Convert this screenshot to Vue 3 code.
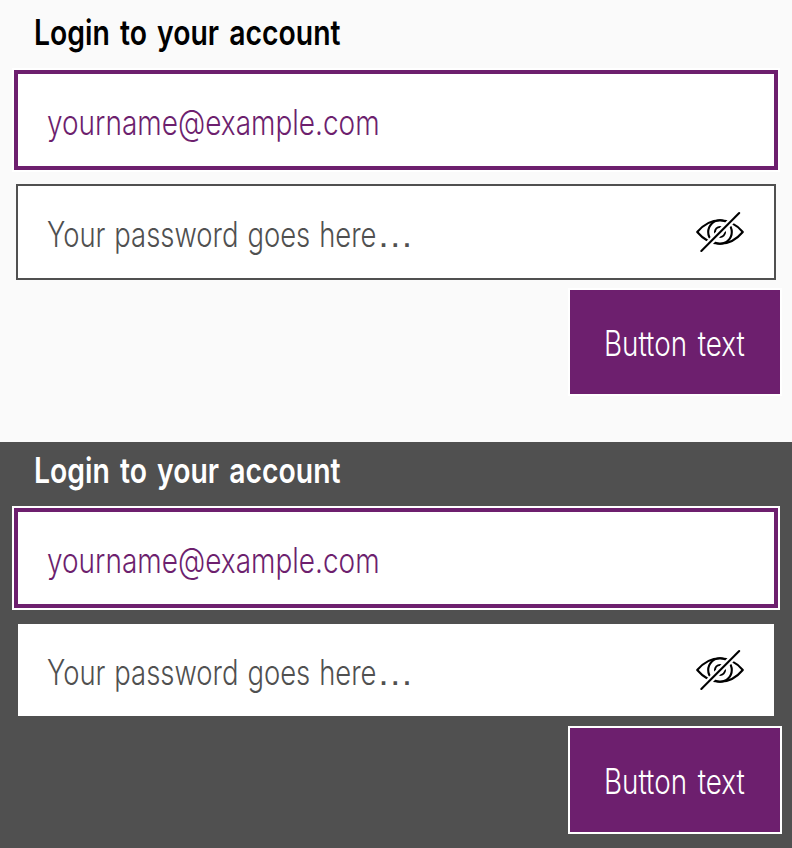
<script setup>
const panels = ['light', 'dark']
</script>

<template>
  <main class="page">
    <form v-for="panel in panels" :key="panel" class="panel" :class="panel" @submit.prevent>
      <h2 class="title"><span class="type">Login to your account</span></h2>
      <div class="field focused"><span class="type email">yourname@example.com</span></div>
      <div class="field password">
        <span class="type hint">Your password goes here<span class="dots">…</span></span>
        <svg class="eye" width="52" height="44" viewBox="0 0 52 44" fill="none" stroke="#000" stroke-width="2.1">
          <path d="M3.2 22C9.5 14.5 17 10.2 26 10.2S42.5 14.5 48.8 22C42.5 29.5 35 33.8 26 33.8S9.5 29.5 3.2 22Z" stroke-linejoin="round" />
          <circle cx="26" cy="22" r="11.8" />
          <circle cx="26" cy="22" r="5" />
          <path d="M7.3 41L45.2 3.1" stroke="#fff" stroke-width="6.6" />
          <path d="M7.3 41L45.2 3.1" stroke-linecap="round" />
        </svg>
      </div>
      <button class="submit"><span class="type">Button text</span></button>
    </form>
  </main>
</template>

<style>
body {
  margin: 0;
}
</style>

<style scoped>
.page {
  width: 792px;
  height: 848px;
  overflow: hidden;
  font-family: Inter, sans-serif;
  font-size: 35px;
  line-height: 42px;
}
.panel {
  box-sizing: border-box;
  display: flex;
  flex-direction: column;
  padding: 0 14px;
}
.light {
  height: 442px;
  padding-top: 11px;
  background: #fafafa;
  color: #000;
}
.dark {
  height: 406px;
  padding-top: 7px;
  background: #505050;
  color: #fff;
}
.type {
  display: inline-block;
  white-space: nowrap;
  transform-origin: left center;
}
.title {
  margin: 0 0 17px 20px;
  font-size: 35px;
  font-weight: 600;
}
.title .type {
  word-spacing: 3.7px;
  transform: scaleX(0.81);
}
.field {
  box-sizing: border-box;
  display: flex;
  align-items: center;
  justify-content: space-between;
  background: #fff;
  font-weight: 300;
}
.focused {
  height: 100px;
  padding: 4px 29px 0;
  border: 4px solid #6d1f6e;
  outline: 2px solid #fff;
  color: #6d1f6e;
}
.email {
  transform: scaleX(0.8);
}
.password {
  height: 96px;
  margin: 14px 2px 0;
  padding: 0 28px 0 29px;
  border: 2px solid #505050;
  color: #505050;
}
.hint {
  padding-top: 4px;
  word-spacing: 1.6px;
  transform: scaleX(0.783);
}
.dots {
  display: inline-block;
  font-family: "Liberation Sans", sans-serif;
  line-height: 1;
  transform: scaleX(1.35);
  transform-origin: left center;
}
.eye {
  flex: none;
}
.submit {
  display: flex;
  align-items: center;
  justify-content: flex-start;
  align-self: flex-end;
  width: 210px;
  height: 104px;
  margin: 10px -2px 0 0;
  padding: 2px 0 0 34px;
  border: 0;
  outline: 2px solid #fff;
  background: #6d1f6e;
  color: #fff;
  font: inherit;
  font-weight: 300;
}
.submit .type {
  word-spacing: 3.5px;
  transform: scaleX(0.795);
}
</style>
